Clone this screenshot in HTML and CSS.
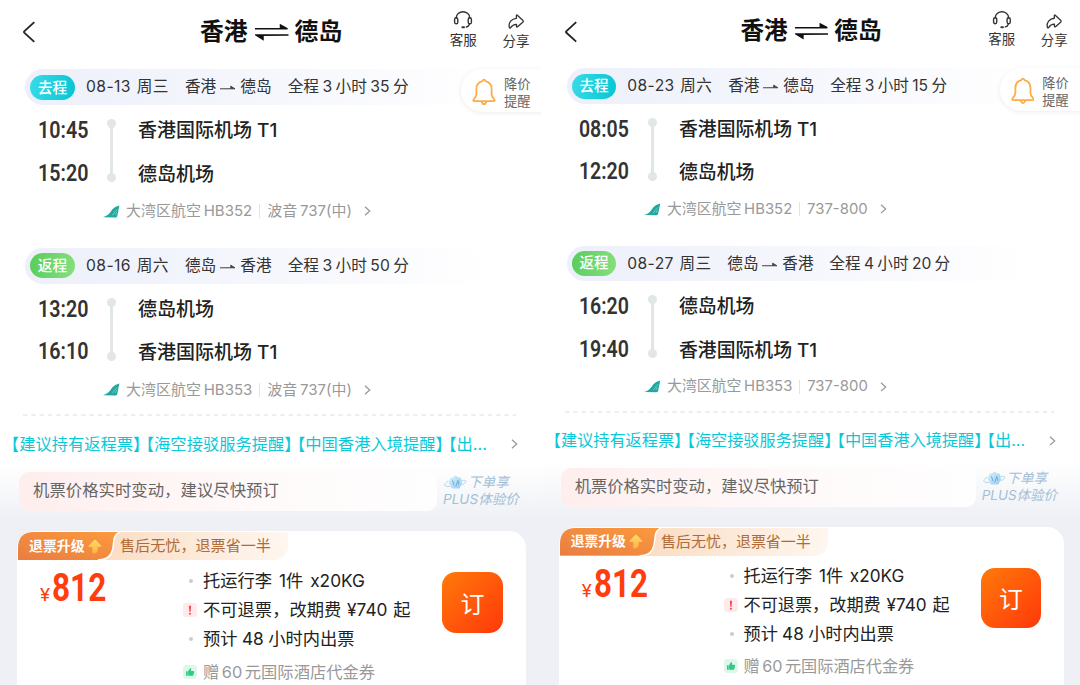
FILE: index.html
```html
<!DOCTYPE html>
<html lang="zh-CN">
<head>
    <meta charset="UTF-8">
    <meta name="viewport" content="width=device-width, initial-scale=1.0">
    <title>香港 ⇌ 德岛</title>
    <link rel="stylesheet" href="styles.css">
</head>
<body>

    <!-- Shared icons -->
    <svg class="sprite" aria-hidden="true">
        <defs>
            <linearGradient id="arrow-fill" x1="0" y1="0" x2="0" y2="1">
                <stop offset="0" stop-color="#ffdc66"/>
                <stop offset="1" stop-color="#fdb244"/>
            </linearGradient>
            <linearGradient id="tag-fill" x1="0" y1="1" x2="1" y2="0">
                <stop offset="0" stop-color="#ea7d42"/>
                <stop offset="1" stop-color="#fb9a3e"/>
            </linearGradient>
            <linearGradient id="gem-fill" x1="0" y1="0" x2="1" y2="1">
                <stop offset="0" stop-color="#d9f0fb"/>
                <stop offset="1" stop-color="#98cdf0"/>
            </linearGradient>
        </defs>
        <symbol id="i-back" viewBox="0 0 14 22">
            <path d="M12.3 1.2 L2.2 10.4 Q1.6 11 2.2 11.6 L12.3 20.8" fill="none" stroke="#222" stroke-width="1.8"/>
        </symbol>
        <symbol id="i-swap" viewBox="0 0 34 20">
            <path d="M0 6.8 H32.5 L25.5 3 V6 M33.5 13 H1 L8 17.4 V14" fill="#111" stroke="#111" stroke-width="1.5"/>
        </symbol>
        <symbol id="i-headset" viewBox="0 0 20 18">
            <g fill="none" stroke="#333" stroke-width="1.4" stroke-linecap="round">
                <path d="M3.3 7 V6.5 A6.7 5.7 0 0 1 16.7 6.5 V7"/>
                <rect x="1.6" y="6.8" width="3.2" height="6" rx="1.6"/>
                <rect x="15.2" y="6.8" width="3.2" height="6" rx="1.6"/>
                <path d="M16.6 13 Q15.6 15.6 13.4 16"/>
                <path d="M9.4 16.3 H11" stroke-width="2"/>
            </g>
        </symbol>
        <symbol id="i-share" viewBox="0 0 18 16">
            <path d="M9.4 1.6 Q9.4 .6 10.3 1.3 L16 6.6 Q16.6 7.3 16 8 L10.6 12.8 Q9.6 13.5 9.5 12.4 V10.3 C6 10.2 4.8 11.8 3.6 13.7 Q2.6 14.6 2.3 13.2 C1.2 8.4 4.6 4.8 9.4 4.3 Z" fill="none" stroke="#333" stroke-width="1.3" stroke-linejoin="round"/>
        </symbol>
        <symbol id="i-bell" viewBox="0 0 24 28">
            <g fill="none" stroke="#fdac47" stroke-width="1.8" stroke-linejoin="round" stroke-linecap="round">
                <path d="M10.3 3.2 Q12 .2 13.7 3.2 C18 4.3 19.6 7.4 19.6 11.2 V16.2 C19.6 18.6 20.4 19.6 22.2 21.2 Q23.5 23.2 21.6 23.2 H2.4 Q.5 23.2 1.8 21.2 C3.6 19.6 4.4 18.6 4.4 16.2 V11.2 C4.4 7.4 6 4.3 10.3 3.2 Z"/>
                <path d="M9.6 24 Q12 28.4 14.4 24"/>
            </g>
        </symbol>
        <symbol id="i-route" viewBox="0 0 16 8">
            <path d="M0 4.8 H15 L10.8 2.2 V4.6" fill="#444" stroke="#444" stroke-width="1"/>
        </symbol>
        <symbol id="i-tail" viewBox="0 0 17 13">
            <path d="M0 12.2 C5.4 10.6 6.4 8.8 9.2 4.6 Q11.7 1.2 16.4 .4 L14.2 11.2 Q13.8 12.4 12.4 12.4 Z" fill="#20a79f"/>
            <path d="M9.4 10.4 Q11 7.2 14.4 4.2 M12 10 L13.8 7" fill="none" stroke="#a5e0dc" stroke-width=".6"/>
        </symbol>
        <symbol id="i-next" viewBox="0 0 7 10">
            <path d="M1 .8 L5.7 5 L1 9.2" fill="none" stroke="currentColor" stroke-width="1.3"/>
        </symbol>
        <symbol id="i-gem" viewBox="0 0 23 17">
            <path d="M6.2 4 L9.6 3 L11.6 1.2 L13.6 3 L17 4 L18.2 9 L15.4 14.6 H8 L4.8 9 Z" fill="url(#gem-fill)"/>
            <path d="M8.4 6.4 L10.2 11.4 M11.8 12.4 L14 6.4 L14.6 10.8" fill="none" stroke="#62a9df" stroke-width=".9"/>
            <path d="M4.4 7 C-1.4 10.4 .4 13.2 6 12.4 M18 6.6 C23.4 5.4 23.4 8.4 17.6 11" fill="none" stroke="#a9cfe9" stroke-width=".9"/>
        </symbol>
        <symbol id="i-tag" viewBox="0 0 102 28">
            <path d="M0 28 V16 Q0 0 16 0 H102 C94 3 96.5 11 94.5 18 Q92 28 80 28 Z" fill="url(#tag-fill)"/>
            <path d="M102 0 C94 3 96.5 11 94.5 18 Q92 28 80 28" fill="none" stroke="#fff" stroke-width="1.5"/>
        </symbol>
        <symbol id="i-up" viewBox="0 0 14 15">
            <path d="M7 .4 Q7.6 .4 13.3 6.7 Q14 8 12.6 8.1 H9.8 V11.4 Q9.6 13.4 6.6 14.6 Q4.2 14.8 4.3 13 V8.1 H1.4 Q0 8 .7 6.7 Q6.4 .4 7 .4 Z" fill="url(#arrow-fill)"/>
        </symbol>
        <symbol id="i-thumb" viewBox="0 0 14 14">
            <rect width="14" height="14" rx="3.5" fill="#ddf7ea"/>
            <path d="M3 6.3 H4.7 V10.8 H3 Z M5.1 6.3 L7 3.2 Q8.4 3 8.2 4.6 L7.9 5.9 H10.4 Q11.3 6 11.1 7 L10.4 10 Q10.2 10.8 9.4 10.8 H5.1 Z" fill="#30c988"/>
        </symbol>
        <symbol id="i-warn" viewBox="0 0 14 14">
            <rect width="14" height="14" rx="3.5" fill="#ffe9ea"/>
            <path d="M5.9 2.8 H8.1 L7.6 8.8 H6.4 Z" fill="#fb4350"/>
            <circle cx="7" cy="10.8" r="1" fill="#fb4350"/>
        </symbol>
    </svg>

    <!-- 08-13 / 08-16 -->
    <section class="phone">
        <header class="topbar">
            <svg class="back"><use href="#i-back"/></svg>
            <h1>香港<svg class="swap"><use href="#i-swap"/></svg>德岛</h1>
            <div class="tool"><svg class="headset"><use href="#i-headset"/></svg>客服</div>
            <div class="tool share"><svg><use href="#i-share"/></svg>分享</div>
        </header>

        <div class="alert"><svg><use href="#i-bell"/></svg><span>降价<br>提醒</span></div>

        <article class="flight">
            <div class="summary">
                <b class="badge go">去程</b>
                <span class="date">08-13 周三</span>
                <span class="route">香港<svg><use href="#i-route"/></svg>德岛</span>
                <span class="total">全程 3 小时 35 分</span>
            </div>
            <div class="stops">
                <div class="times"><time>10:45</time><time>15:20</time></div>
                <div class="line"></div>
                <div class="airports"><span>香港国际机场 T1</span><span>德岛机场</span></div>
            </div>
            <div class="airline">
                <svg class="tail"><use href="#i-tail"/></svg>
                <span>大湾区航空 HB352</span><i></i><span>波音 737(中)</span>
                <svg class="next"><use href="#i-next"/></svg>
            </div>
        </article>

        <article class="flight">
            <div class="summary">
                <b class="badge back-trip">返程</b>
                <span class="date">08-16 周六</span>
                <span class="route">德岛<svg><use href="#i-route"/></svg>香港</span>
                <span class="total">全程 3 小时 50 分</span>
            </div>
            <div class="stops">
                <div class="times"><time>13:20</time><time>16:10</time></div>
                <div class="line"></div>
                <div class="airports"><span>德岛机场</span><span>香港国际机场 T1</span></div>
            </div>
            <div class="airline">
                <svg class="tail"><use href="#i-tail"/></svg>
                <span>大湾区航空 HB353</span><i></i><span>波音 737(中)</span>
                <svg class="next"><use href="#i-next"/></svg>
            </div>
        </article>

        <svg class="divider"><line x1="0" y1="1" x2="493" y2="1"/></svg>

        <div class="notices">
            <span>【建议持有返程票】</span><span>【海空接驳服务提醒】</span><span>【中国香港入境提醒】</span><span>【出...</span>
            <svg class="next"><use href="#i-next"/></svg>
        </div>

        <div class="offers">
            <div class="promo">
                <p>机票价格实时变动，建议尽快预订</p>
                <div class="plus"><span><svg><use href="#i-gem"/></svg>下单享</span><span>PLUS体验价</span></div>
            </div>
            <div class="card">
                <div class="tag">
                    <svg class="tag-bg"><use href="#i-tag"/></svg>
                    <b>退票升级<svg><use href="#i-up"/></svg></b>
                    <span>售后无忧，退票省一半</span>
                </div>
                <div class="fare">
                    <div class="price"><small>¥</small><strong>812</strong></div>
                    <ul>
                        <li class="bag"><i class="dot"></i>托运行李 1件 x20KG</li>
                        <li><svg><use href="#i-warn"/></svg>不可退票，改期费 ¥740 起</li>
                        <li class="issue"><i class="dot"></i>预计 48 小时内出票</li>
                        <li class="gift"><svg><use href="#i-thumb"/></svg>赠 60 元国际酒店代金券</li>
                    </ul>
                    <button>订</button>
                </div>
            </div>
        </div>
    </section>

    <!-- 08-23 / 08-27 -->
    <section class="phone second">
        <header class="topbar">
            <svg class="back"><use href="#i-back"/></svg>
            <h1>香港<svg class="swap"><use href="#i-swap"/></svg>德岛</h1>
            <div class="tool"><svg class="headset"><use href="#i-headset"/></svg>客服</div>
            <div class="tool share"><svg><use href="#i-share"/></svg>分享</div>
        </header>

        <div class="alert"><svg><use href="#i-bell"/></svg><span>降价<br>提醒</span></div>

        <article class="flight">
            <div class="summary">
                <b class="badge go">去程</b>
                <span class="date">08-23 周六</span>
                <span class="route">香港<svg><use href="#i-route"/></svg>德岛</span>
                <span class="total">全程 3 小时 15 分</span>
            </div>
            <div class="stops">
                <div class="times"><time>08:05</time><time>12:20</time></div>
                <div class="line"></div>
                <div class="airports"><span>香港国际机场 T1</span><span>德岛机场</span></div>
            </div>
            <div class="airline">
                <svg class="tail"><use href="#i-tail"/></svg>
                <span>大湾区航空 HB352</span><i></i><span>737-800</span>
                <svg class="next"><use href="#i-next"/></svg>
            </div>
        </article>

        <article class="flight">
            <div class="summary">
                <b class="badge back-trip">返程</b>
                <span class="date">08-27 周三</span>
                <span class="route">德岛<svg><use href="#i-route"/></svg>香港</span>
                <span class="total">全程 4 小时 20 分</span>
            </div>
            <div class="stops">
                <div class="times"><time>16:20</time><time>19:40</time></div>
                <div class="line"></div>
                <div class="airports"><span>德岛机场</span><span>香港国际机场 T1</span></div>
            </div>
            <div class="airline">
                <svg class="tail"><use href="#i-tail"/></svg>
                <span>大湾区航空 HB353</span><i></i><span>737-800</span>
                <svg class="next"><use href="#i-next"/></svg>
            </div>
        </article>

        <svg class="divider"><line x1="0" y1="1" x2="493" y2="1"/></svg>

        <div class="notices">
            <span>【建议持有返程票】</span><span>【海空接驳服务提醒】</span><span>【中国香港入境提醒】</span><span>【出...</span>
            <svg class="next"><use href="#i-next"/></svg>
        </div>

        <div class="offers">
            <div class="promo">
                <p>机票价格实时变动，建议尽快预订</p>
                <div class="plus"><span><svg><use href="#i-gem"/></svg>下单享</span><span>PLUS体验价</span></div>
            </div>
            <div class="card">
                <div class="tag">
                    <svg class="tag-bg"><use href="#i-tag"/></svg>
                    <b>退票升级<svg><use href="#i-up"/></svg></b>
                    <span>售后无忧，退票省一半</span>
                </div>
                <div class="fare">
                    <div class="price"><small>¥</small><strong>812</strong></div>
                    <ul>
                        <li class="bag"><i class="dot"></i>托运行李 1件 x20KG</li>
                        <li><svg><use href="#i-warn"/></svg>不可退票，改期费 ¥740 起</li>
                        <li class="issue"><i class="dot"></i>预计 48 小时内出票</li>
                        <li class="gift"><svg><use href="#i-thumb"/></svg>赠 60 元国际酒店代金券</li>
                    </ul>
                    <button>订</button>
                </div>
            </div>
        </div>
    </section>

</body>
</html>
```

FILE: styles.css
```css
* {
    box-sizing: border-box;
    margin: 0;
    padding: 0;
}

body {
    display: flex;
    width: 1080px;
    height: 685px;
    overflow: hidden;
    background: #fff;
    color: #222;
    font-family: Inter, "Noto Sans CJK SC", sans-serif;
    white-space: nowrap;
}

svg {
    display: block;
    flex: none;
}

.sprite {
    position: absolute;
    width: 0;
    height: 0;
}

.phone {
    position: relative;
    display: flex;
    flex-direction: column;
    flex: none;
    width: 542px;
    height: 692px;
    overflow: hidden;
    background: #fff;
}

.phone.second {
    zoom: 0.9926;
}

/* Top bar */
.topbar {
    display: flex;
    flex: none;
    height: 69px;
    padding-left: 22px;
}

.back {
    width: 14px;
    height: 22px;
    margin-top: 21px;
}

h1 {
    display: flex;
    align-items: center;
    height: 63px;
    margin-left: 164px;
    font-size: 23.8px;
    line-height: 24px;
    font-weight: 700;
    color: #111;
}

.swap {
    width: 34px;
    height: 20px;
    margin: 0 6px 0 7px;
}

.tool {
    display: flex;
    flex-direction: column;
    align-items: center;
    width: 54px;
    margin-left: 95px;
    padding-top: 11px;
    font-size: 13.5px;
    line-height: 20px;
    color: #333;
}

.tool.share {
    margin-left: 1px;
    padding-top: 14px;
}

.headset {
    width: 20px;
    height: 18px;
    margin-bottom: 1px;
}

.share svg {
    width: 18px;
    height: 16px;
    margin-bottom: 1px;
}

/* Price alert, sits over the first summary bar */
.alert {
    position: absolute;
    top: 69px;
    right: 0;
    z-index: 1;
    display: flex;
    align-items: center;
    gap: 8px;
    width: 81px;
    height: 43px;
    padding-left: 11px;
    border-radius: 22px 0 0 22px;
    background: #fff;
    box-shadow: 0 1px 5px rgba(0, 0, 0, 0.08);
    font-size: 13.3px;
    line-height: 16.5px;
    color: #666;
}

.alert svg {
    width: 24px;
    height: 28px;
    margin-top: 3px;
}

.alert span {
    margin-top: 4px;
}

/* Flights */
.flight {
    flex: none;
    height: 178.5px;
    padding-left: 25px;
}

.summary {
    display: flex;
    align-items: center;
    gap: 16px;
    width: 465px;
    height: 36px;
    padding-left: 5px;
    border-radius: 18px;
    background: linear-gradient(90deg, #edf0fa, #f7f8fd 60%, #fff);
    font-size: 15.7px;
    line-height: 36px;
    color: #333;
}

.badge {
    width: 45px;
    height: 25px;
    margin-right: -5px;
    border-radius: 13px;
    font-size: 14.7px;
    line-height: 26px;
    font-weight: 500;
    text-align: center;
    color: #fff;
}

.go {
    background: linear-gradient(100deg, #38dce6, #06c5d4);
}

.back-trip {
    background: linear-gradient(100deg, #59cc5b, #86e07f);
}

.date {
    letter-spacing: 0.4px;
    word-spacing: 1px;
}

.route {
    display: flex;
    align-items: center;
}

.route svg {
    width: 16px;
    height: 8px;
    margin: 2px 4px 0;
}

.total {
    word-spacing: -1px;
}

.stops {
    display: flex;
    height: 93px;
    padding-top: 4px;
}

.times {
    display: flex;
    flex-direction: column;
    align-items: flex-end;
    width: 63px;
}

.times time {
    height: 42.5px;
    font-family: Roboto, sans-serif;
    font-size: 24px;
    line-height: 43px;
    font-weight: 600;
    transform: scaleX(0.82);
    transform-origin: right;
    color: #333;
}

.line {
    position: relative;
    width: 3px;
    height: 57px;
    margin: 13px 25px 0 22px;
    background: #e1e6e8;
}

.line::before,
.line::after {
    content: "";
    position: absolute;
    left: -3px;
    width: 9px;
    height: 9px;
    border-radius: 50%;
    background: #e1e6e8;
}

.line::before {
    top: -3px;
}

.line::after {
    bottom: -3px;
}

.airports {
    display: flex;
    flex-direction: column;
    font-size: 19px;
    line-height: 43.5px;
    font-weight: 500;
}

.airline {
    display: flex;
    align-items: center;
    height: 28px;
    margin-top: -1px;
    padding-left: 78px;
    font-size: 15px;
    line-height: 28px;
    color: #999;
    word-spacing: -1.5px;
}

.tail {
    width: 17px;
    height: 13px;
    margin-right: 6px;
}

.airline i {
    width: 1px;
    height: 14px;
    margin: 0 7px;
    background: #e4e4e4;
}

.next {
    width: 7px;
    height: 10px;
    color: #999;
}

.airline .next {
    margin-left: 12px;
}

.divider {
    width: 493px;
    height: 2px;
    margin: -12px 0 0 23px;
    stroke: #ddd;
    stroke-width: 1.2;
    stroke-dasharray: 4.5 3.8;
}

/* Notices */
.notices {
    display: flex;
    align-items: center;
    gap: 4.7px;
    height: 42px;
    margin-top: 7px;
    padding-left: 11px;
    flex: none;
    font-size: 16.3px;
    line-height: 42px;
    color: #0bc8d8;
    font-feature-settings: "halt";
}

.notices .next {
    margin: 0 24px 0 auto;
}

/* Offers */
.offers {
    flex: 1;
    background: linear-gradient(#fff, #eef0f5 56px);
}

.promo {
    display: flex;
    padding: 7px 0 0 19px;
}

.promo p {
    width: 418px;
    height: 39px;
    padding-left: 14px;
    border-radius: 10px;
    background: linear-gradient(90deg, #feeeee, #fffafa 60%, #fefefe);
    font-size: 16.4px;
    line-height: 37px;
    color: #666;
}

.plus {
    display: flex;
    flex-direction: column;
    padding: 2px 0 0 6px;
    font-size: 13.6px;
    line-height: 17px;
    font-style: italic;
    color: #a3bfd6;
}

.plus span {
    display: flex;
}

.plus svg {
    width: 23px;
    height: 17px;
    margin: 0 1px;
}

.card {
    height: 170px;
    margin: 20px 16px 0 17px;
    padding-top: 1px;
    border-radius: 17px 17px 0 0;
    background: #fff;
}

.tag {
    position: relative;
    display: flex;
    align-items: center;
    width: 270px;
    height: 28px;
    margin-left: 1px;
    border-radius: 16px 0 14px 0;
    background: linear-gradient(90deg, #fbdcc1 30%, #fef7f0);
    font-size: 15.1px;
    line-height: 28px;
    color: #b06a38;
}

.tag-bg {
    position: absolute;
    left: 0;
    top: 0;
    width: 102px;
    height: 28px;
}

.tag b {
    position: relative;
    display: flex;
    align-items: center;
    gap: 3px;
    width: 102px;
    padding-left: 11px;
    font-size: 13.9px;
    color: #fff;
}

.tag b svg {
    width: 14px;
    height: 15px;
}

.fare {
    display: flex;
}

.price {
    display: flex;
    align-items: baseline;
    width: 166px;
    height: 60px;
    padding: 5px 0 0 23px;
    font-family: Roboto, sans-serif;
    color: #ff3d0d;
}

.price small {
    font-size: 19px;
    font-weight: 400;
}

.price strong {
    margin-left: 2px;
    font-size: 39px;
    transform: scaleX(0.81);
    transform-origin: left;
}

.fare ul {
    width: 259px;
    padding-top: 6px;
    list-style: none;
    font-size: 17.3px;
    line-height: 28px;
}

.fare li {
    display: flex;
    align-items: center;
    height: 29px;
    color: #222;
    word-spacing: 1px;
}

.fare li svg {
    width: 14px;
    height: 14px;
    margin-right: 6px;
}

.fare .bag {
    word-spacing: 2px;
}

.fare .issue {
    word-spacing: -0.5px;
}

.fare .gift {
    margin-top: 4px;
    font-size: 16.3px;
    color: #999;
    word-spacing: -2px;
}

.fare .dot {
    width: 4px;
    height: 4px;
    margin: 0 10px 0 6px;
    border-radius: 50%;
    background: #ccc;
}

.fare button {
    width: 61px;
    height: 61px;
    margin-top: 12px;
    border: none;
    border-radius: 14px;
    background: linear-gradient(135deg, #ff7a0a, #ff380a);
    font: 400 24px "Noto Sans CJK SC", sans-serif;
    color: #fff;
}
```
